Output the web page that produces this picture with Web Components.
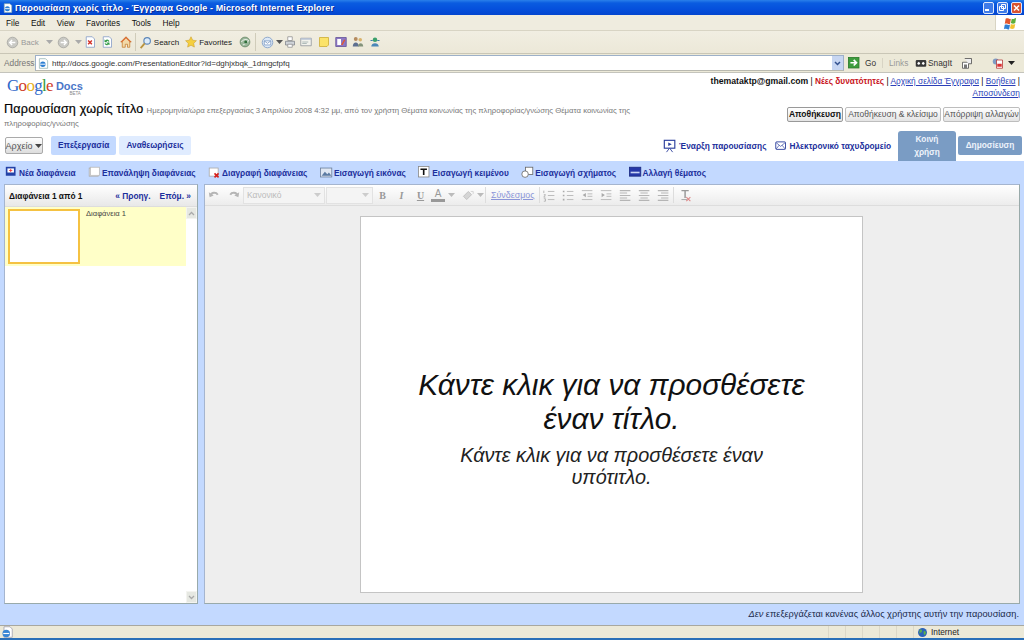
<!DOCTYPE html>
<html lang="el">
<head>
<meta charset="utf-8">
<title>Παρουσίαση χωρίς τίτλο</title>
<style>
html, body { margin: 0; height: 640px; overflow: hidden; }
body { width: 1024px; display: flex; flex-direction: column; font-family: "Liberation Sans", Arial, sans-serif; font-size: 11px; color: #000; background: #fff; }
ie-titlebar, ie-menubar, ie-toolbar, ie-address, ie-status, docs-header, docs-tabs, slide-actions { flex: none; }
docs-workspace { flex: 1; min-height: 0; }
</style>
</head>
<body>
<ie-titlebar>Παρουσίαση χωρίς τίτλο - Έγγραφα Google - Microsoft Internet Explorer</ie-titlebar>
<ie-menubar></ie-menubar>
<ie-toolbar></ie-toolbar>
<ie-address>http://docs.google.com/PresentationEditor?id=dghjxbqk_1dmgcfpfq</ie-address>
<docs-header></docs-header>
<docs-tabs></docs-tabs>
<slide-actions></slide-actions>
<docs-workspace>
  <slide-list slot="left"></slide-list>
  <format-bar slot="bar"></format-bar>
  <slide-canvas slot="canvas">
    <span slot="title">Κάντε κλικ για να προσθέσετε έναν τίτλο.</span>
    <span slot="subtitle">Κάντε κλικ για να προσθέσετε έναν υπότιτλο.</span>
  </slide-canvas>
</docs-workspace>
<ie-status></ie-status>

<script>
const ICONS = {
  ieDoc: '<path d="M2 1h9l3 3v11H2z" fill="#fff" stroke="#8aa"/><circle cx="7" cy="9" r="4" fill="#2d7fd3"/><path d="M3 9h8" stroke="#fff" stroke-width="1.4"/>',
  back: '<circle cx="8" cy="8" r="6.5" fill="#c9c9c4" stroke="#a5a5a0"/><path d="M11.5 8H5M7.5 5 4.5 8l3 3" fill="none" stroke="#fff" stroke-width="1.7"/>',
  forward: '<circle cx="8" cy="8" r="6.5" fill="#c9c9c4" stroke="#a5a5a0"/><path d="M4.5 8H11M8.5 5l3 3-3 3" fill="none" stroke="#fff" stroke-width="1.7"/>',
  stop: '<path d="M3 1h8l3 3v11H3z" fill="#fff" stroke="#7d95c4"/><path d="m5.5 6 5 5m0-5-5 5" stroke="#d3322a" stroke-width="2"/>',
  refresh: '<path d="M3 1h8l3 3v11H3z" fill="#fff" stroke="#7d95c4"/><path d="M11 7a3 3 0 0 0-5-1L5 5v3h3L7 7a2 2 0 0 1 3 .6M5 10a3 3 0 0 0 5 1l1 1V9H8l1 1a2 2 0 0 1-3-.5" fill="#2f9a45" stroke="#2f9a45" stroke-width=".5"/>',
  home: '<path d="M8 1 1 8h2v7h4v-4h3v4h3V8h2z" fill="#f2d9a8" stroke="#c47a2c"/><path d="M8 1 1 8h2l5-5 5 5h2z" fill="#d9622b"/>',
  search: '<circle cx="10" cy="6" r="4" fill="#dcebf9" stroke="#5c86b8" stroke-width="1.4"/><path d="m7 9-5 6" stroke="#b9933f" stroke-width="2.2"/>',
  star: '<path d="m8 1 2.2 4.6 5 .7-3.6 3.5.9 5L8 12.4l-4.5 2.4.9-5L.8 6.3l5-.7z" fill="#f5cf3f" stroke="#c99a22" stroke-width=".7"/>',
  media: '<circle cx="8" cy="8" r="6.5" fill="#9ab79a" stroke="#5d7f5d"/><path d="M3 8c3-4 7-4 10-2M5 12c3-1 6-3 8-6" stroke="#fff" fill="none"/><circle cx="9" cy="8" r="2" fill="#2f6e3a"/>',
  mail: '<circle cx="8" cy="8" r="6.5" fill="#dce8f6" stroke="#7b9ac4"/><path d="M4 6h8v5H4z" fill="#fff" stroke="#7b9ac4"/><path d="m4 6 4 3 4-3" fill="none" stroke="#7b9ac4"/>',
  print: '<path d="M5 1h6v5H5z" fill="#fff" stroke="#8d8d8d"/><path d="M2 7h12v5H2z" fill="#cfd3d8" stroke="#7d8288"/><path d="M5 11h6v4H5z" fill="#fff" stroke="#8d8d8d"/>',
  edit: '<path d="M1 3h14v10H1z" fill="#f2f2ec" stroke="#8a8f96"/><path d="M1 3h14v2H1z" fill="#b9c5d6"/><path d="M3 8h8M3 10h6" stroke="#9aa"/>',
  note: '<path d="M2 2h12v10l-2 2H2z" fill="#fbe36a" stroke="#c9a92f"/>',
  research: '<path d="M1 2h14v12H1z" fill="#8d78c4" stroke="#5f4e94"/><path d="M3 4h5v8H3z" fill="#fff"/><path d="m9 12 4-7" stroke="#e4572e" stroke-width="2"/>',
  people: '<circle cx="5" cy="4" r="2.6" fill="#b58b5e"/><path d="M1 14c0-7 8-7 8 0z" fill="#5d6f8f"/><circle cx="11" cy="5" r="2.4" fill="#d9b36c"/><path d="M8 14c0-6 7-6 7 0z" fill="#83937a"/>',
  msn: '<circle cx="8" cy="5" r="3" fill="#3aa06c"/><path d="M3 14c0-6 10-6 10 0z" fill="#4a86b8"/><path d="M2 6h3M11 6h3" stroke="#3a7fa8" stroke-width="1.5"/>',
  go: '<rect x=".5" y=".5" width="13" height="13" fill="#3d9c3d" stroke="#2a7a2a"/><path d="M3 7h7M7 3.5 10.5 7 7 10.5" fill="none" stroke="#fff" stroke-width="2"/>',
  snag: '<rect x="1" y="4" width="14" height="9" rx="1.5" fill="#3a3a3a"/><circle cx="5" cy="8.5" r="2.4" fill="#fff" stroke="#111"/><circle cx="11" cy="8.5" r="2.4" fill="#fff" stroke="#111"/>',
  hold: '<path d="M2 7h8v8H2z" fill="#fff" stroke="#444"/><path d="M5 2h9v7h-4" fill="#eee" stroke="#444"/><path d="M4 10h4v5H4z" fill="#777"/>',
  pdf: '<circle cx="5" cy="6" r="4" fill="#7f9cc4"/><path d="M6 4h8v11H6z" fill="#fff" stroke="#b03030"/><path d="M7 9h6v4H7z" fill="#d33"/>',
  flag: '<path d="M3 3c3-1 4 1 6 0l-1 6c-2 1-3-1-6 0z" fill="#e4572e"/><path d="M10 3c2 1 3 0 5-1l-1 6c-2 1-3 1-5 0z" fill="#5cae3a"/><path d="M2 10c3-1 4 1 6 0l-1 5c-2 1-3-1-6 0z" fill="#2f7fd3"/><path d="M9 9c2 1 3 1 5 0l-1 5c-2 1-3 1-5 0z" fill="#f2c230"/>',
  newSlide: '<rect x="1" y="1" width="12" height="11" fill="#2442a8"/><rect x="3" y="3" width="8" height="5" fill="#fff"/><path d="M7 3.5v4M5 5.5h4" stroke="#e33"/>',
  dupSlide: '<rect x="1.5" y="2.5" width="11" height="10" fill="#fff" stroke="#a7a7a7"/><rect x="3" y="1.5" width="11" height="10" fill="#fff" stroke="#bbb"/>',
  delSlide: '<rect x="1.5" y="2.5" width="11" height="10" fill="#fff" stroke="#aaa"/><path d="m8 9 5 5m0-5-5 5" stroke="#d6201c" stroke-width="2"/>',
  image: '<rect x=".5" y="2.5" width="14" height="11" fill="#dfe7f3" stroke="#6c7f9c"/><path d="m2 12 4-5 3 3 2-2 3 4z" fill="#5c7ba3"/>',
  textBox: '<rect x=".5" y=".5" width="13" height="13" fill="#fff" stroke="#888"/><path d="M3 3h8v2H8v6H6V5H3z" fill="#111"/>',
  shape: '<rect x="5.5" y="1.5" width="9" height="9" fill="#fff" stroke="#666"/><circle cx="5" cy="10" r="4" fill="#fff" stroke="#666"/>',
  theme: '<rect x=".5" y="1.5" width="14" height="11" fill="#2638a8" stroke="#1b2a80"/><rect x="2" y="7" width="11" height="2" fill="#c9d4f5"/>',
  present: '<rect x="1.5" y="1.5" width="12" height="9" fill="#fff" stroke="#2a3d9c" stroke-width="1.3"/><path d="m6 4 4 2-4 2z" fill="#2a3d9c"/><path d="m7 11-3 4m4-4 3 4" stroke="#2a3d9c"/>',
  email: '<rect x="1" y="2.5" width="13" height="10" rx="1" fill="#fff" stroke="#2a3d9c" stroke-width="1.2"/><path d="m1.5 3.500 6 5 6-5M1.500 12l4-5m8 5-4-5" fill="none" stroke="#2a3d9c" stroke-width=".9"/>',
  undo: '<path d="M3 8a5 5 0 0 1 9-1" fill="none" stroke="#b5b5b5" stroke-width="2.4"/><path d="m1 4 1 6 5-2z" fill="#b5b5b5"/>',
  redo: '<path d="M13 8a5 5 0 0 0-9-1" fill="none" stroke="#b5b5b5" stroke-width="2.4"/><path d="m15 4-1 6-5-2z" fill="#b5b5b5"/>',
  olist: '<path d="M1 2v3M1 7h2l-2 3h2M1 12h2v3H1" fill="none" stroke="#aaa"/><path d="M6 3h8M6 8h8M6 13h8" stroke="#bbb" stroke-width="1.2"/>',
  ulist: '<path d="M1 2h2v2H1zM1 7h2v2H1zM1 12h2v2H1z" fill="#aaa"/><path d="M6 3h8M6 8h8M6 13h8" stroke="#bbb" stroke-width="1.2"/>',
  outdent: '<path d="M1 2h13M8 6h6M8 9h6M1 13h13" stroke="#bbb" stroke-width="1.2"/><path d="m6 5-4 2.500L6 10z" fill="#aaa"/>',
  indent: '<path d="M1 2h13M8 6h6M8 9h6M1 13h13" stroke="#bbb" stroke-width="1.2"/><path d="m2 5 4 2.500L2 10z" fill="#aaa"/>',
  aleft: '<path d="M1 2h13M1 5h9M1 8h13M1 11h9M1 14h13" stroke="#b5b5b5" stroke-width="1.3"/>',
  acenter: '<path d="M1 2h13M3 5h9M1 8h13M3 11h9M1 14h13" stroke="#b5b5b5" stroke-width="1.3"/>',
  aright: '<path d="M1 2h13M5 5h9M1 8h13M5 11h9M1 14h13" stroke="#b5b5b5" stroke-width="1.3"/>',
  clear: '<path d="M3 2h9M7.500 2v9" stroke="#999" stroke-width="1.8"/><path d="M3 13h7" stroke="#999"/><path d="m9 10 5 5m0-5-5 5" stroke="#d88" stroke-width="1.3"/>',
  globe: '<circle cx="8" cy="8" r="6.500" fill="#2c62b8"/><path d="M4 4c3-1 4 1 3 3s-3 1-4 3M10 6c2-1 3 1 3 3l-2 3c-1-2-2-3-1-6" fill="#5cb04a"/>',
  ieLogo: '<path d="M4 1h8l3 3v11H4z" fill="#fff" stroke="#99a"/><circle cx="7" cy="10" r="5" fill="#3a86d4"/><path d="M3 10h8" stroke="#fff" stroke-width="1.5"/>',
  paint: '<path d="m3 9 6-6 4 4-6 6z" fill="#d5d5d5" stroke="#bbb"/><path d="M12 3h3v3" stroke="#ccc" fill="none"/>'
};
const icon = (name, size = 16) =>
  `<svg width="${size}" height="${size}" viewBox="0 0 16 16" style="flex:none;display:block">${ICONS[name]}</svg>`;
const caret = (col = '#555') =>
  `<svg width="7" height="4" viewBox="0 0 7 4" style="flex:none;display:block"><path d="M0 0h7L3.500 4z" fill="${col}"/></svg>`;

// base class: every element just stamps its html in an open shadow root
class Shadowed extends HTMLElement {
  constructor() {
    super();
    this.attachShadow({ mode: 'open' });
    this.shadowRoot.innerHTML = `<style>${this.css()}</style>${this.html()}`;
  }
  css() { return ''; }
  html() { return '<slot></slot>'; }
}

class IeTitlebar extends Shadowed {
  css() { return `
    :host { display: flex; align-items: center; height: 15px; padding: 0 2px 0 3px; gap: 2px; overflow: hidden;
      background: linear-gradient(#2a80ea 0, #0a5ce0 20%, #0550dc 60%, #0345cf 100%); color: #fff;
      font: bold 9px "Liberation Sans", sans-serif; letter-spacing: .12px; text-shadow: 1px 1px 0 #0a2f9a; }
    .t { flex: 1; white-space: nowrap; }
    .b { width: 11px; height: 12px; box-sizing: border-box; border: 1px solid #dfe8fb; border-radius: 2px; background: #3f7be8; margin-left: 1px; }
    .b.x { background: #d8532f; }
    .b svg { display: block; }
  `; }
  html() { return `${icon('ieDoc', 10)}<span class="t"><slot></slot></span>
    <span class="b"><svg width="9" height="10"><path d="M1 7h4" stroke="#fff" stroke-width="2"/></svg></span>
    <span class="b"><svg width="9" height="10"><path d="M3.500 1.500h4v4h-4zM1.500 3.500h4v4h-4z" fill="none" stroke="#fff"/></svg></span>
    <span class="b x"><svg width="9" height="10"><path d="m2 2.500 5 5m0-5-5 5" stroke="#fff" stroke-width="1.5"/></svg></span>`; }
}

class IeMenubar extends Shadowed {
  css() { return `
    :host { display: flex; align-items: center; height: 16px; box-sizing: border-box; background: #efecdf; border-bottom: 1px solid #d8d4c4; font-size: 8.300px; color: #111; }
    span { margin-left: 6px; margin-right: 5.500px; }
    .flag { margin-left: auto; width: 29px; height: 15px; box-sizing: border-box; background: #fff; border-left: 1px solid #d8d4c4; display: flex; justify-content: center; align-items: center; }
  `; }
  html() { return `<span>File</span><span>Edit</span><span>View</span><span>Favorites</span><span>Tools</span><span>Help</span>
    <div class="flag">${icon('flag', 14)}</div>`; }
}

class IeToolbar extends Shadowed {
  css() { return `
    :host { display: flex; align-items: center; height: 23px; background: linear-gradient(#f1eee2, #ece8d8); border-bottom: 1px solid #c9c6b6; font-size: 8px; color: #222; padding-left: 6px; box-sizing: border-box; }
    .i { display: flex; align-items: center; gap: 2px; }
    .sep { width: 1px; height: 18px; background: #d0ccba; margin-left: 3px; }
    .dim { color: #999; }
  `; }
  html() { return `<div class="i">${icon('back',13)}<span class="dim">Back</span></div><div class="i" style="margin-left:7px">${caret('#aaa')}</div>
    <div class="i" style="margin-left:4px">${icon('forward',13)}</div><div class="i" style="margin-left:5px">${caret('#aaa')}</div>
    <div class="i" style="margin-left:2px">${icon('stop',12)}</div><div class="i" style="margin-left:5px">${icon('refresh',12)}</div><div class="i" style="margin-left:7px">${icon('home',12)}</div>
    <div class="sep"></div>
    <div class="i" style="margin-left:3px">${icon('search',13)}<span>Search</span></div>
    <div class="i" style="margin-left:6px">${icon('star',12)}<span>Favorites</span></div>
    <div class="i" style="margin-left:7px">${icon('media',12)}</div>
    <div class="sep" style="margin-left:4px"></div>
    <div class="i" style="margin-left:5px">${icon('mail',13)}${caret()}</div>
    <div class="i" style="margin-left:1px">${icon('print',12)}</div><div class="i" style="margin-left:4px">${icon('edit',12)}</div><div class="i" style="margin-left:6px">${icon('note',12)}</div><div class="i" style="margin-left:5px">${icon('research',12)}</div><div class="i" style="margin-left:5px">${icon('people',12)}</div><div class="i" style="margin-left:5px">${icon('msn',12)}</div>`; }
}

class IeAddress extends Shadowed {
  css() { return `
    :host { display: flex; align-items: center; height: 18px; background: #ece9d8; font-size: 8.300px; color: #333; box-sizing: border-box; }
    .lab { width: 35px; padding-left: 4px; color: #777; box-sizing: border-box; }
    .box { width: 809px; height: 16px; display: flex; align-items: center; gap: 3px; padding-left: 2px; background: #fff; border: 1px solid #9db0c8; border-bottom-color: #b9b9b0; box-sizing: border-box; font-size: 8px; }
    .url { flex: 1; white-space: nowrap; }
    .dd { width: 11px; height: 14px; background: #c7d6f2; display: flex; align-items: center; justify-content: center; }
    .go { display: flex; align-items: center; gap: 4px; margin-left: 4px; width: 34px; }
    .links { color: #999; width: 22px; padding-left: 6px; border-left: 1px solid #d8d4c4; }
    .t { display: flex; align-items: center; gap: 1px; }
  `; }
  html() { return `<span class="lab">Address</span>
    <div class="box">${icon('ieDoc',11)}<span class="url"><slot></slot></span>
      <span class="dd"><svg width="7" height="5"><path d="m1 1 2.500 2.500L6 1" fill="none" stroke="#33518f" stroke-width="1.5"/></svg></span></div>
    <div class="go">${icon('go',13)}<span>Go</span></div>
    <span class="links">Links</span>
    <div class="t" style="margin-left:4px">${icon('snag',12)}<span>SnagIt</span></div>
    <div class="t" style="margin-left:9px">${icon('hold',12)}</div>
    <div class="t" style="margin-left:19px;gap:4px">${icon('pdf',12)}${caret('#222')}</div>`; }
}

class DocsHeader extends Shadowed {
  css() { return `
    :host { display: flex; justify-content: space-between; height: 58px; background: #fff; box-sizing: border-box; padding: 3px 4px 0 4px; border-top: 1px solid #c4c4bc; }
    .left { width: 640px; }
    .logo { display: flex; align-items: flex-start; height: 24px; padding-left: 3px; }
    .g { font: 17px/20px "Liberation Serif", serif; letter-spacing: -.7px; }
    .docs { font: bold 11px/21px "Liberation Sans", sans-serif; color: #4a76c8; margin-left: 3px; position: relative; }
    .beta { position: absolute; right: 2px; top: 15px; font: 4.500px/5px "Liberation Sans", sans-serif; color: #888; }
    .row { font-size: 7.750px; line-height: 13px; color: #777; margin-top: 3px; white-space: nowrap; }
    .row b { font: 12.600px/13px "Liberation Sans", sans-serif; color: #000; letter-spacing: .2px; margin-right: 1px; -webkit-text-stroke: .2px #000; }
    .right { width: 330px; text-align: right; display: flex; flex-direction: column; align-items: flex-end; }
    .links { font-size: 8.300px; line-height: 11.500px; }
    .links b { color: #111; font-size: 8.700px; } .links i { font-style: normal; font-weight: bold; color: #c8141c; }
    .links a { color: #2c3fb8; text-decoration: underline; }
    .btns { display: flex; gap: 2px; margin-top: 8px; }
    .btns span { display: block; text-align: center; height: 15px; box-sizing: border-box; line-height: 13px; font-size: 8.500px; color: #555; background: linear-gradient(#fff, #e4e4e4); border: 1px solid #bdbdbd; border-radius: 2px; white-space: nowrap; }
    .btns span.p { color: #111; font-weight: bold; border-color: #999; }
    g1 { color: #3068c8; } g2 { color: #d03c28; } g3 { color: #e8b020; } g4 { color: #3a9a3c; }
  `; }
  html() { return `<div class="left">
      <div class="logo"><span class="g"><g1>G</g1><g2>o</g2><g3>o</g3><g1>g</g1><g4>l</g4><g2>e</g2></span>
        <span class="docs">Docs<span class="beta">BETA</span></span></div>
      <div class="row"><b>Παρουσίαση χωρίς τίτλο</b> <span>Ημερομηνία/ώρα επεξεργασίας 3 Απριλίου 2008 4:32 μμ, από τον χρήστη Θέματα κοινωνίας της πληροφορίας/γνώσης Θέματα κοινωνίας της</span><br><span>πληροφορίας/γνώσης</span></div>
    </div>
    <div class="right">
      <div class="links"><b>themataktp@gmail.com</b> | <i>Νέες δυνατότητες</i> | <a>Αρχική σελίδα Έγγραφα</a> | <a>Βοήθεια</a> |<br><a>Αποσύνδεση</a></div>
      <div class="btns"><span class="p" style="width:56px">Αποθήκευση</span><span style="width:96px">Αποθήκευση &amp; κλείσιμο</span><span style="width:77px">Απόρριψη αλλαγών</span></div>
    </div>`; }
}

class DocsTabs extends Shadowed {
  css() { return `
    :host { display: flex; align-items: flex-end; height: 31px; box-sizing: border-box; padding: 0 2px 0 5px; background: #fff; font-size: 8.300px; font-weight: bold; color: #1c2f9c; }
    .file { align-self: flex-start; margin-top: 7px; height: 17px; width: 38px; box-sizing: border-box; display: flex; align-items: center; justify-content: center; gap: 3px; border: 1px solid #aaa; border-radius: 2px; background: linear-gradient(#fff, #ddd); color: #555; font-weight: normal; font-size: 9px; }
    .tab { align-self: flex-start; margin: 6px 0 0 8px; height: 19px; line-height: 19px; padding: 0 7px; background: #c3d9ff; border-radius: 2px; }
    .tab + .tab { margin-left: 3px; background: #e0ecff; padding: 0 7px; }
    .spacer { flex: 1; }
    .a { display: flex; align-items: center; gap: 2px; margin-right: 9px; align-self: flex-start; margin-top: 8px; height: 15px; }
    .share, .pub { background: #7a9cc4; color: #eef3fb; text-align: center; }
    .share { width: 58px; height: 30px; line-height: 13px; padding-top: 2px; box-sizing: border-box; border-radius: 3px 3px 0 0; margin-left: -2px; }
    .pub { width: 64px; height: 19px; line-height: 18px; margin-left: 2px; margin-bottom: 6px; border-radius: 2px; }
  `; }
  html() { return `<div class="file">Αρχείο${caret('#444')}</div>
    <div class="tab">Επεξεργασία</div><div class="tab">Αναθεωρήσεις</div>
    <div class="spacer"></div>
    <div class="a">${icon('present',14)}<span>Έναρξη παρουσίασης</span></div>
    <div class="a">${icon('email',12)}<span>Ηλεκτρονικό ταχυδρομείο</span></div>
    <div class="share">Κοινή<br>χρήση</div><div class="pub">Δημοσίευση</div>`; }
}

class SlideActions extends Shadowed {
  css() { return `
    :host { display: flex; align-items: center; height: 23px; background: #c3d9ff; padding-left: 5px; font-size: 8.300px; font-weight: bold; color: #1c2f9c; box-sizing: border-box; }
    div { display: flex; align-items: center; gap: 1px; margin-right: 12.500px; white-space: nowrap; }
  `; }
  html() {
    const items = [['newSlide','Νέα διαφάνεια'],['dupSlide','Επανάληψη διαφάνειας'],['delSlide','Διαγραφή διαφάνειας'],['image','Εισαγωγή εικόνας'],['textBox','Εισαγωγή κειμένου'],['shape','Εισαγωγή σχήματος'],['theme','Αλλαγή θέματος']];
    return items.map(([i, t]) => `<div>${icon(i, 13)}<span>${t}</span></div>`).join('');
  }
}

class DocsWorkspace extends Shadowed {
  css() { return `
    :host { display: flex; flex-direction: column; background: #c3d9ff; box-sizing: border-box; }
    .cols { flex: 1; min-height: 0; display: grid; grid-template-columns: 194px 816px; column-gap: 6px; padding: 0 4px; }
    .panel { border: 1px solid #a5b5cf; border-right-color: #9aa; border-bottom-color: #9aa; background: #fff; display: flex; flex-direction: column; min-height: 0; box-sizing: border-box; }
    .right { background: #eeeeee; }
    .foot { flex: none; height: 21px; line-height: 21px; text-align: right; padding-right: 5px; font-size: 9.200px; color: #1a2a4a; white-space: nowrap; }
    .foot i { font-style: italic; }
  `; }
  html() { return `<div class="cols">
      <div class="panel"><slot name="left"></slot></div>
      <div class="panel right"><slot name="bar"></slot><slot name="canvas"></slot></div>
    </div>
    <div class="foot"><i>Δεν</i> επεξεργάζεται κανένας άλλος χρήστης αυτήν την παρουσίαση.</div>`; }
}

class SlideList extends Shadowed {
  css() { return `
    :host { display: flex; flex-direction: column; flex: 1; min-height: 0; font-size: 8.350px; }
    .head { flex: none; height: 21px; display: flex; align-items: center; justify-content: space-between; padding: 0 6px 0 4px; font-weight: bold; color: #111; background: linear-gradient(#fff, #e8e8e8); border-bottom: 1px solid #ddd; }
    .head span span { color: #1c2f9c; margin-left: 9px; }
    .body { flex: 1; min-height: 0; display: flex; }
    .items { flex: 1; }
    .row { height: 59px; background: #ffffc8; display: flex; padding: 2px 0 0 3px; box-sizing: border-box; color: #444; gap: 6px; font-size: 7.600px; }
    .thumb { width: 72px; height: 55px; background: #fff; border: 2px solid #f5c242; box-sizing: border-box; }
    .bar { width: 11px; background: #fff; display: flex; flex-direction: column; justify-content: space-between; }
    .btn { height: 12px; background: #e6e8e2; border: 1px solid #f4f4f0; display: flex; align-items: center; justify-content: center; box-sizing: border-box; }
  `; }
  html() { return `<div class="head"><span>Διαφάνεια 1 από 1</span><span><span>« Προηγ.</span><span>Επόμ. »</span></span></div>
    <div class="body"><div class="items"><div class="row"><div class="thumb"></div><div class="label">Διαφάνεια 1</div></div></div>
      <div class="bar">
        <div class="btn"><svg width="7" height="5"><path d="m1 4 2.500-2.500L6 4" fill="none" stroke="#aaa" stroke-width="1.3"/></svg></div>
        <div class="btn"><svg width="7" height="5"><path d="m1 1 2.500 2.500L6 1" fill="none" stroke="#aaa" stroke-width="1.3"/></svg></div>
      </div></div>`; }
}

class FormatBar extends Shadowed {
  css() { return `
    :host { display: flex; align-items: center; flex: none; height: 21px; background: linear-gradient(#fff, #ececec); border-bottom: 1px solid #ddd; box-sizing: border-box; color: #aaa; font-size: 8.500px; }
    .i { flex: none; width: 19px; display: flex; justify-content: center; align-items: center; }
    .sel { flex: none; height: 17px; box-sizing: border-box; border: 1px solid #e2e2e2; background: #f4f4f4; display: flex; align-items: center; justify-content: space-between; padding: 0 3px; color: #bbb; }
    .sep { flex: none; width: 1px; height: 16px; background: #ddd; }
    .letter { flex: none; width: 19px; text-align: center; font: bold 10px "Liberation Serif", serif; color: #999; }
    .fore { flex: none; width: 14px; text-align: center; font: 10px/11px "Liberation Sans", sans-serif; color: #999; border-bottom: 3px solid #999; margin-left: 1px; }
    a { color: #8b95d8; text-decoration: underline; font-size: 8.900px; }
  `; }
  html() {
    const lists = ['olist','ulist','outdent','indent','aleft','acenter','aright'];
    return `<div class="i">${icon('undo',13)}</div><div class="i">${icon('redo',13)}</div>
      <div class="sel" style="width:82px"><span>Κανονικό</span>${caret('#ccc')}</div>
      <div class="sel" style="width:47px;margin-left:1px;justify-content:flex-end">${caret('#ccc')}</div>
      <div class="letter">B</div><div class="letter"><i>I</i></div><div class="letter"><u>U</u></div>
      <div class="fore">A</div><span style="margin:0 6px 0 3px">${caret('#bbb')}</span>
      ${icon('paint',13)}<span style="margin:0 0 0 3px">${caret('#bbb')}</span>
      <div class="sep" style="margin:0 5px 0 1px"></div><a>Σύνδεσμος</a><div class="sep" style="margin:0 0 0 5px"></div>
      ${lists.map(n => `<div class="i">${icon(n,13)}</div>`).join('')}
      <div class="sep" style="margin:0 2px 0 0"></div><div class="i">${icon('clear',13)}</div>`;
  }
}

class SlideCanvas extends Shadowed {
  css() { return `
    :host { display: flex; flex: 1; min-height: 0; justify-content: center; padding: 10px 0 10px; box-sizing: border-box; margin-left: -1px; }
    .slide { width: 503px; background: #fff; border: 1px solid #c4c4c4; box-sizing: border-box; text-align: center; font-style: italic; color: #111; display: flex; flex-direction: column; align-items: center; padding-top: 151px; }
    .title { width: 440px; font-size: 29.800px; line-height: 34px; }
    .sub { width: 360px; font-size: 19.850px; line-height: 22px; margin-top: 8px; color: #222; }
  `; }
  html() { return `<div class="slide"><div class="title"><slot name="title"></slot></div><div class="sub"><slot name="subtitle"></slot></div></div>`; }
}

class IeStatus extends Shadowed {
  css() { return `
    :host { display: flex; align-items: center; height: 15px; box-sizing: border-box; background: #ece9d8; border-top: 1px solid #a8a8a0; border-bottom: 2px solid #2a6fb8; font-size: 8.300px; color: #222; }
    .e { margin-left: 1px; }
    .cell { height: 100%; border-left: 1px solid #dcd8c8; width: 17px; box-sizing: border-box; }
    .zone { display: flex; align-items: center; gap: 3px; border-left: 1px solid #dcd8c8; height: 100%; width: 111px; padding-left: 3px; box-sizing: border-box; }
  `; }
  html() { return `<div class="e">${icon('ieLogo',12)}</div><div style="flex:1"></div>
    <div class="cell"></div><div class="cell"></div><div class="cell"></div><div class="cell"></div><div class="cell"></div>
    <div class="zone">${icon('globe',11)}<span>Internet</span></div>`; }
}

customElements.define('ie-titlebar', IeTitlebar);
customElements.define('ie-menubar', IeMenubar);
customElements.define('ie-toolbar', IeToolbar);
customElements.define('ie-address', IeAddress);
customElements.define('docs-header', DocsHeader);
customElements.define('docs-tabs', DocsTabs);
customElements.define('slide-actions', SlideActions);
customElements.define('docs-workspace', DocsWorkspace);
customElements.define('slide-list', SlideList);
customElements.define('format-bar', FormatBar);
customElements.define('slide-canvas', SlideCanvas);
customElements.define('ie-status', IeStatus);
</script>
</body>
</html>
